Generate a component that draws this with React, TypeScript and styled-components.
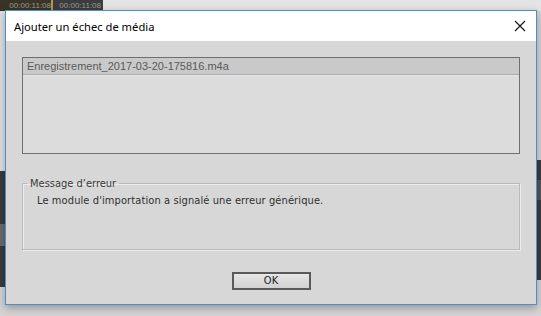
import React from "react";
import styled, { createGlobalStyle } from "styled-components";

const Global = createGlobalStyle`
  html, body { margin: 0; padding: 0; }
  body { width: 541px; height: 316px; overflow: hidden; background: #d3d3d3; }
`;

const Desktop = styled.div`
  position: relative;
  width: 541px;
  height: 316px;
  overflow: hidden;
  background: #d4d4d4;
  padding: 10px 4px 0 5px;
  box-sizing: border-box;
`;

const Fragment = styled.div<{ $bg: string }>`
  position: absolute;
  background: ${(p) => p.$bg};
  overflow: hidden;
  font-family: "Liberation Sans", Arial, sans-serif;
  display: flex;
  align-items: flex-start;
`;

const Timecode = styled.span`
  font-size: 8px;
  color: #9a9a9a;
  margin: 1px 0 0 auto;
  padding-right: 2px;
`;

const Window = styled.div`
  position: relative;
  z-index: 1;
  width: 532px;
  height: 295px;
  box-sizing: border-box;
  border: 1px solid #4a90cf;
  background: #d7d7d7;
  box-shadow: 0 3px 8px rgba(0, 0, 0, 0.3);
  display: flex;
  flex-direction: column;
`;

const TitleBar = styled.div`
  height: 30px;
  flex: none;
  background: #ffffff;
  display: flex;
  align-items: center;
  justify-content: space-between;
  padding: 0 10px 0 8px;
`;

const Title = styled.span`
  font-family: "Noto Sans", "Open Sans", sans-serif;
  font-size: 11.2px;
  color: #000;
  padding-top: 1px;
`;

const CloseIcon = styled.svg`
  width: 12px;
  height: 12px;
  display: block;
`;

const Body = styled.div`
  flex: 1;
  display: flex;
  flex-direction: column;
  padding: 16px 16px 14px 16px;
  font-family: "DejaVu Sans Condensed", "DejaVu Sans", sans-serif;
  font-size: 11px;
`;

const ListBox = styled.div`
  height: 97px;
  box-sizing: border-box;
  border: 1px solid #6f6f6f;
  background: #dcdcdc;
  display: flex;
  flex-direction: column;
`;

const ListRow = styled.div`
  height: 16px;
  flex: none;
  background: #c9c9c9;
  border-bottom: 1px solid #ababab;
  color: #5a5a5a;
  display: flex;
  align-items: center;
  padding-left: 4px;
  box-shadow: 0 1px 0 #e4e4e4;
  font-family: "Liberation Sans", Arial, sans-serif;
  font-size: 11px;
`;

const Group = styled.fieldset`
  margin: 23px 0 0 0;
  padding: 0 14px 0 14px;
  height: 73px;
  box-sizing: border-box;
  border: 1px solid #bababa;
  box-shadow: 1px 1px 0 #ececec, inset 1px 1px 0 #ececec;
  min-width: 0;
`;

const Legend = styled.legend`
  padding: 0 3px 0 3px;
  margin-left: -10px;
  color: #3a3a3a;
`;

const Message = styled.div`
  color: #303030;
  padding-top: 4px;
  letter-spacing: 0.1px;
`;

const Footer = styled.div`
  flex: 1;
  display: flex;
  align-items: flex-end;
  justify-content: center;
`;

const Button = styled.button`
  width: 79px;
  height: 18px;
  box-sizing: border-box;
  border: 2px solid #5a5a5a;
  background: linear-gradient(#e6e6e6, #d2d2d2);
  font-family: "DejaVu Sans Condensed", "DejaVu Sans", sans-serif;
  font-size: 11px;
  color: #222;
  padding: 0;
  line-height: 14px;
`;

export default function App() {
  return (
    <>
      <Global />
      <Desktop>
        <Fragment $bg="#3a3426" style={{ left: 0, top: 0, width: 53, height: 11 }}>
          <Timecode>00:00:11:08</Timecode>
        </Fragment>
        <Fragment $bg="#b09a48" style={{ left: 51, top: 0, width: 2, height: 11 }} />
        <Fragment $bg="#3c3c3c" style={{ left: 53, top: 0, width: 50, height: 11 }}>
          <Timecode>00:00:11:08</Timecode>
        </Fragment>
        <Fragment $bg="#e4e4e4" style={{ left: 103, top: 0, width: 438, height: 11 }} />
        <Fragment $bg="#e0e0e0" style={{ left: 0, top: 11, width: 5, height: 160 }} />
        <Fragment $bg="#3b3b3b" style={{ left: 0, top: 171, width: 5, height: 116 }} />
        <Fragment $bg="#6a6a6a" style={{ left: 0, top: 224, width: 5, height: 22 }} />
        <Fragment $bg="#3b3b3b" style={{ left: 537, top: 160, width: 4, height: 120 }} />
        <Fragment $bg="#555555" style={{ left: 537, top: 180, width: 4, height: 20 }} />
        <Window>
          <TitleBar>
            <Title>Ajouter un échec de média</Title>
            <CloseIcon viewBox="0 0 12 12">
              <path d="M1 1 L11 11 M11 1 L1 11" stroke="#111" strokeWidth="1.1" fill="none" />
            </CloseIcon>
          </TitleBar>
          <Body>
            <ListBox>
              <ListRow>Enregistrement_2017-03-20-175816.m4a</ListRow>
            </ListBox>
            <Group>
              <Legend>Message d’erreur</Legend>
              <Message>Le module d'importation a signalé une erreur générique.</Message>
            </Group>
            <Footer>
              <Button>OK</Button>
            </Footer>
          </Body>
        </Window>
      </Desktop>
    </>
  );
}
